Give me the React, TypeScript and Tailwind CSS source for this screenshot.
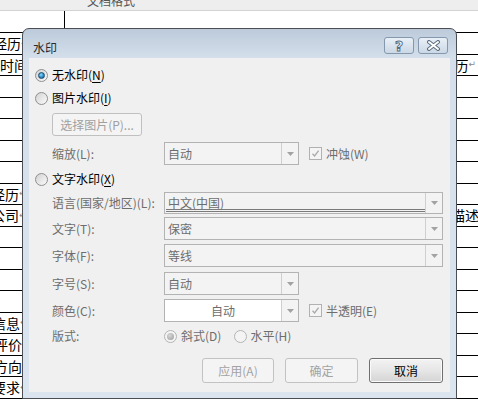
import React from "react";

const ui = "font-['Noto_Sans_CJK_SC','Microsoft_YaHei',sans-serif]";
const doc = "font-['Noto_Sans_CJK_SC',sans-serif]";

// rows of the document table behind the dialog
const rows: { left?: string; leftMark?: boolean; leftX?: string; right?: string; rightMark?: boolean }[] = [
  { left: "经历", leftMark: true, leftX: "-ml-[7px]" },
  { left: "时间", leftX: "ml-0", right: "历", rightMark: true },
  {},
  {},
  {},
  {},
  {},
  { left: "经历", leftMark: true, leftX: "-ml-[9px]" },
  { left: "公司", leftMark: true, leftX: "-ml-[9px]", right: "描述" },
  {},
  {},
  {},
  {},
  { left: "信息", leftMark: true, leftX: "-ml-[8px]" },
  { left: "评价", leftX: "-ml-[6px]" },
  { left: "方向", leftX: "-ml-[6px]" },
  { left: "要求", leftMark: true, leftX: "-ml-[8px]" },
];

function Mark() {
  return <span className="font-['DejaVu_Sans',sans-serif] text-[9px] text-[#8a8a8a]">↵</span>;
}

function Radio({ checked, disabled }: { checked?: boolean; disabled?: boolean }) {
  if (disabled) {
    return (
      <span className="flex h-[13px] w-[13px] shrink-0 items-center justify-center rounded-full border border-[#b4b4b4] bg-[#f4f4f4]">
        {checked && <span className="h-[7px] w-[7px] rounded-full bg-[radial-gradient(circle_at_40%_35%,#d8d8d8,#9a9a9a)]" />}
      </span>
    );
  }
  return (
    <span className="flex h-[13px] w-[13px] shrink-0 items-center justify-center rounded-full border border-[#8e8f8f] bg-linear-to-br from-[#d2d2d2] to-[#fbfbfb]">
      {checked && (
        <span className="h-[7px] w-[7px] rounded-full border border-[#1b4d73] bg-[radial-gradient(circle_at_40%_35%,#8adcff,#2a8fc9_55%,#0d4a78)]" />
      )}
    </span>
  );
}

function Check() {
  return (
    <span className="flex h-[13px] w-[13px] shrink-0 items-center justify-center border border-[#b1b1b1] bg-[#f4f4f4]">
      <svg width="9" height="9" viewBox="0 0 9 9">
        <path d="M1.5 4.8 L3.6 7 L7.6 1.6" fill="none" stroke="#a9a9a9" strokeWidth="1.3" />
      </svg>
    </span>
  );
}

function Combo({ text, long, white, center, lined }: { text: string; long?: boolean; white?: boolean; center?: boolean; lined?: boolean }) {
  return (
    <div
      className={`flex h-full shrink-0 border border-[#b3b3b3] ${long ? "w-[279px]" : "w-[135px]"} ${white ? "bg-white" : "bg-[#f3f3f3]"}`}
    >
      <div className={`relative flex flex-1 items-center px-[3px] text-[#6d6d6d] ${center ? "justify-center" : ""}`}>
        {text}
        {lined && (
          <div className="absolute bottom-[1px] left-[1px] right-0 flex flex-col gap-[1px]">
            <div className="h-px bg-[#7a7a7a]" />
            <div className="h-px bg-[#7a7a7a]" />
          </div>
        )}
      </div>
      <div className="flex w-[17px] items-center justify-center border-l border-[#cfcfcf] bg-[#f3f3f3]">
        <svg width="7" height="4" viewBox="0 0 7 4">
          <path d="M0 0 H7 L3.5 4 Z" fill="#a2a2a2" />
        </svg>
      </div>
    </div>
  );
}

function Field({ label, h, mt, children }: { label: string; h: string; mt: string; children: React.ReactNode }) {
  return (
    <div className={`flex items-center ${h} ${mt}`}>
      <span className="ml-[17px] w-[112px] shrink-0 text-[#6d6d6d]">{label}</span>
      {children}
    </div>
  );
}

export default function App() {
  return (
    <div className="relative h-[416px] w-[478px] overflow-hidden bg-white">
      {/* document behind */}
      <div className={`${doc} flex flex-col`}>
        <div className="flex h-[11px] items-end overflow-hidden border-b border-[#d3d3d3] bg-[#eeeeee]">
          <span className="mb-[3px] ml-[87px] text-[12px] leading-none text-[#555]">文档格式</span>
        </div>
        <div className="flex h-[21px]">
          <div className="w-[65px] border-r border-black" />
        </div>
        <div className="flex flex-col border-t border-black">
          {rows.map((r, i) => (
            <div key={i} className="flex h-[21.5px] items-center justify-between overflow-hidden border-b border-black text-[14px] leading-none text-black">
              <span className={`flex items-center whitespace-nowrap ${r.leftX ?? ""}`}>
                {r.left}
                {r.leftMark && <Mark />}
              </span>
              {r.right && (
                <span className={`flex items-center whitespace-nowrap ${r.rightMark ? "mr-[2px]" : "-mr-[1px]"}`}>
                  {r.right}
                  {r.rightMark && <Mark />}
                </span>
              )}
            </div>
          ))}
        </div>
      </div>

      {/* watermark dialog */}
      <div
        className={`${ui} absolute left-[22px] top-[28px] flex h-[371px] w-[435px] flex-col rounded-t-[7px] border border-[#4b4f55] bg-[linear-gradient(180deg,#bccada_0px,#d4dfeb_29px,#dbe5f0_100%)] text-[12px] leading-none`}
      >
        <div className="flex h-[29px] shrink-0 items-start justify-between pl-[10px] pr-[8px] pt-[8px]">
          <span className="mt-[5px] text-[#2a2a2a]">水印</span>
          <div className="flex gap-[4px]">
            <div className="flex h-[17px] w-[30px] items-center justify-center rounded-[3px] border border-[#8597ad] bg-linear-to-b from-[#e9eff6] to-[#cbd8e6]">
              <span className="font-['DejaVu_Sans',sans-serif] text-[14px] font-bold leading-none text-white [-webkit-text-stroke:1px_#5c6c80]">?</span>
            </div>
            <div className="flex h-[17px] w-[30px] items-center justify-center rounded-[3px] border border-[#8597ad] bg-linear-to-b from-[#e9eff6] to-[#cbd8e6]">
              <svg width="15" height="11" viewBox="0 0 15 11">
                <path d="M3 2 L12 9 M12 2 L3 9" stroke="#5c6c80" strokeWidth="4" strokeLinecap="round" />
                <path d="M3 2 L12 9 M12 2 L3 9" stroke="#ffffff" strokeWidth="2" strokeLinecap="round" />
              </svg>
            </div>
          </div>
        </div>

        <div className="mx-[6px] mb-[6px] flex flex-1 flex-col bg-[#f0f0f0] pl-[6px] pr-[7px] pt-[7px] text-black">
          <div className="flex h-[20px] items-center gap-[4px]">
            <Radio checked />
            <span>
              无水印(<span className="underline underline-offset-2">N</span>)
            </span>
          </div>
          <div className="mt-[3px] flex h-[20px] items-center gap-[4px]">
            <Radio />
            <span>
              图片水印(<span className="underline underline-offset-2">I</span>)
            </span>
          </div>
          <div className="ml-[17px] mt-[5px] flex h-[23px] w-[90px] items-center justify-center rounded-[3px] border border-[#c0c0c0] bg-[#f4f4f4] text-[#a0a0a0]">
            选择图片(P)...
          </div>
          <Field label="缩放(L):" h="h-[23px]" mt="mt-[6px]">
            <Combo text="自动" />
            <div className="ml-[10px] flex items-center gap-[4px] text-[#6d6d6d]">
              <Check />
              <span>冲蚀(W)</span>
            </div>
          </Field>
          <div className="mt-[4px] flex h-[20px] items-center gap-[4px]">
            <Radio />
            <span>
              文字水印(<span className="underline underline-offset-2">X</span>)
            </span>
          </div>
          <Field label="语言(国家/地区)(L):" h="h-[22px]" mt="mt-[3px]">
            <Combo text="中文(中国)" long lined />
          </Field>
          <Field label="文字(T):" h="h-[23px]" mt="mt-[3px]">
            <Combo text="保密" long />
          </Field>
          <Field label="字体(F):" h="h-[23px]" mt="mt-[4px]">
            <Combo text="等线" long />
          </Field>
          <Field label="字号(S):" h="h-[23px]" mt="mt-[5px]">
            <Combo text="自动" />
          </Field>
          <Field label="颜色(C):" h="h-[23px]" mt="mt-[4px]">
            <Combo text="自动" white center />
            <div className="ml-[10px] flex items-center gap-[4px] text-[#6d6d6d]">
              <Check />
              <span>半透明(E)</span>
            </div>
          </Field>
          <Field label="版式:" h="h-[20px]" mt="mt-[4px]">
            <div className="flex items-center gap-[4px] text-[#6d6d6d]">
              <Radio checked disabled />
              <span>斜式(D)</span>
            </div>
            <div className="ml-[13px] flex items-center gap-[3px] text-[#6d6d6d]">
              <Radio disabled />
              <span>水平(H)</span>
            </div>
          </Field>
          <div className="mt-[12px] flex justify-end gap-[11px]">
            <div className="flex h-[25px] w-[72px] items-center justify-center rounded-[3px] border border-[#c2c2c2] bg-[#f4f4f4] text-[#a3a3a3]">
              应用(A)
            </div>
            <div className="flex h-[25px] w-[73px] items-center justify-center rounded-[3px] border border-[#c2c2c2] bg-[#f4f4f4] text-[#a3a3a3]">
              确定
            </div>
            <div className="flex h-[25px] w-[74px] items-center justify-center rounded-[3px] border border-[#6f6f6f] bg-linear-to-b from-[#f3f3f3] via-[#e6e6e6] to-[#d4d4d4] text-black shadow-[inset_0_0_0_1px_#fbfbfb]">
              取消
            </div>
          </div>
        </div>
      </div>
    </div>
  );
}
